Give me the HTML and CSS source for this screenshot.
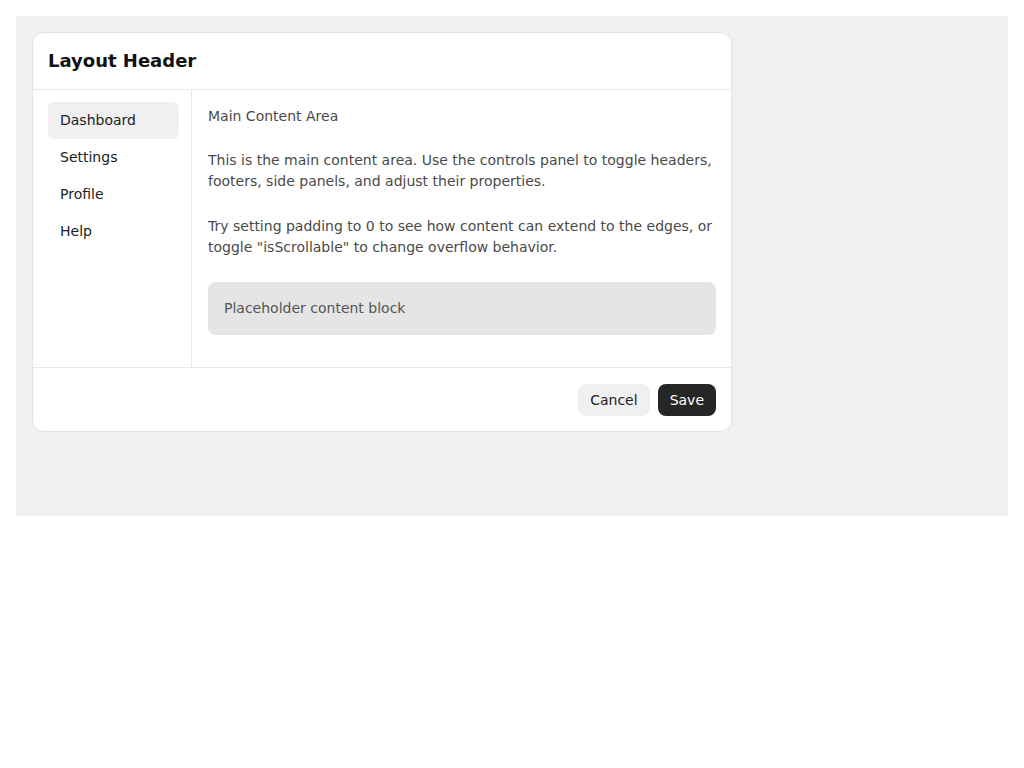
FILE: index.html
```html
<!DOCTYPE html>
<html>
<head>
<meta charset="utf-8">
<link rel="stylesheet" href="styles.css">
</head>
<body>
<div class="stage">
  <div class="card">
    <header class="card-header">Layout Header</header>
    <div class="card-body">
      <nav class="side">
        <div class="nav-item active">Dashboard</div>
        <div class="nav-item">Settings</div>
        <div class="nav-item">Profile</div>
        <div class="nav-item">Help</div>
      </nav>
      <main class="main">
        <p class="title">Main Content Area</p>
        <p>This is the main content area. Use the controls panel to toggle headers, footers, side panels, and adjust their properties.</p>
        <p>Try setting padding to 0 to see how content can extend to the edges, or toggle "isScrollable" to change overflow behavior.</p>
        <div class="placeholder">Placeholder content block</div>
      </main>
    </div>
    <footer class="card-footer">
      <button class="btn btn-cancel">Cancel</button>
      <button class="btn btn-save">Save</button>
    </footer>
  </div>
</div>
</body>
</html>
```

FILE: styles.css
```css
* { box-sizing: border-box; }
html, body { margin: 0; padding: 0; background: #fff; }
body {
  padding: 16px;
  font-family: "DejaVu Sans", sans-serif;
  font-size: 14px;
  line-height: 21px;
}
.stage {
  background: #f0f0f0;
  height: 500px;
  padding: 16px;
}
.card {
  width: 700px;
  height: 400px;
  background: #fff;
  border: 1px solid #e4e4e4;
  border-radius: 12px;
  display: flex;
  flex-direction: column;
  overflow: hidden;
}
.card-header {
  padding: 16px 15px;
  font-size: 18px;
  font-weight: bold;
  line-height: 24px;
  color: #111;
  border-bottom: 1px solid #e8e8e8;
}
.card-body {
  flex: 1;
  display: flex;
  min-height: 0;
}
.side {
  width: 159px;
  flex: none;
  border-right: 1px solid #e8e8e8;
  padding: 12px 12px 12px 15px;
  display: flex;
  flex-direction: column;
}
.nav-item {
  padding: 8px 12px;
  border-radius: 6px;
  color: #222;
}
.nav-item.active { background: #f0f0f0; }
.main {
  flex: 1;
  padding: 15px 15px 32px 16px;
  display: flex;
  flex-direction: column;
  gap: 24px;
  color: #4a4a4a;
}
.main p { margin: 0; }
.main p.title { margin: 1px 0 -1px; }
.placeholder {
  background: #e5e5e5;
  border-radius: 8px;
  padding: 16px;
  color: #555;
}
.card-footer {
  border-top: 1px solid #e8e8e8;
  padding: 16px 15px 15px;
  display: flex;
  justify-content: flex-end;
  gap: 8px;
}
.btn {
  font-family: "DejaVu Sans", sans-serif;
  font-size: 14px;
  line-height: 20px;
  height: 32px;
  padding: 6px 12px;
  border: none;
  border-radius: 8px;
}
.btn-cancel { background: #f0f0f0; color: #222; }
.btn-save { background: #262626; color: #fff; }
```
